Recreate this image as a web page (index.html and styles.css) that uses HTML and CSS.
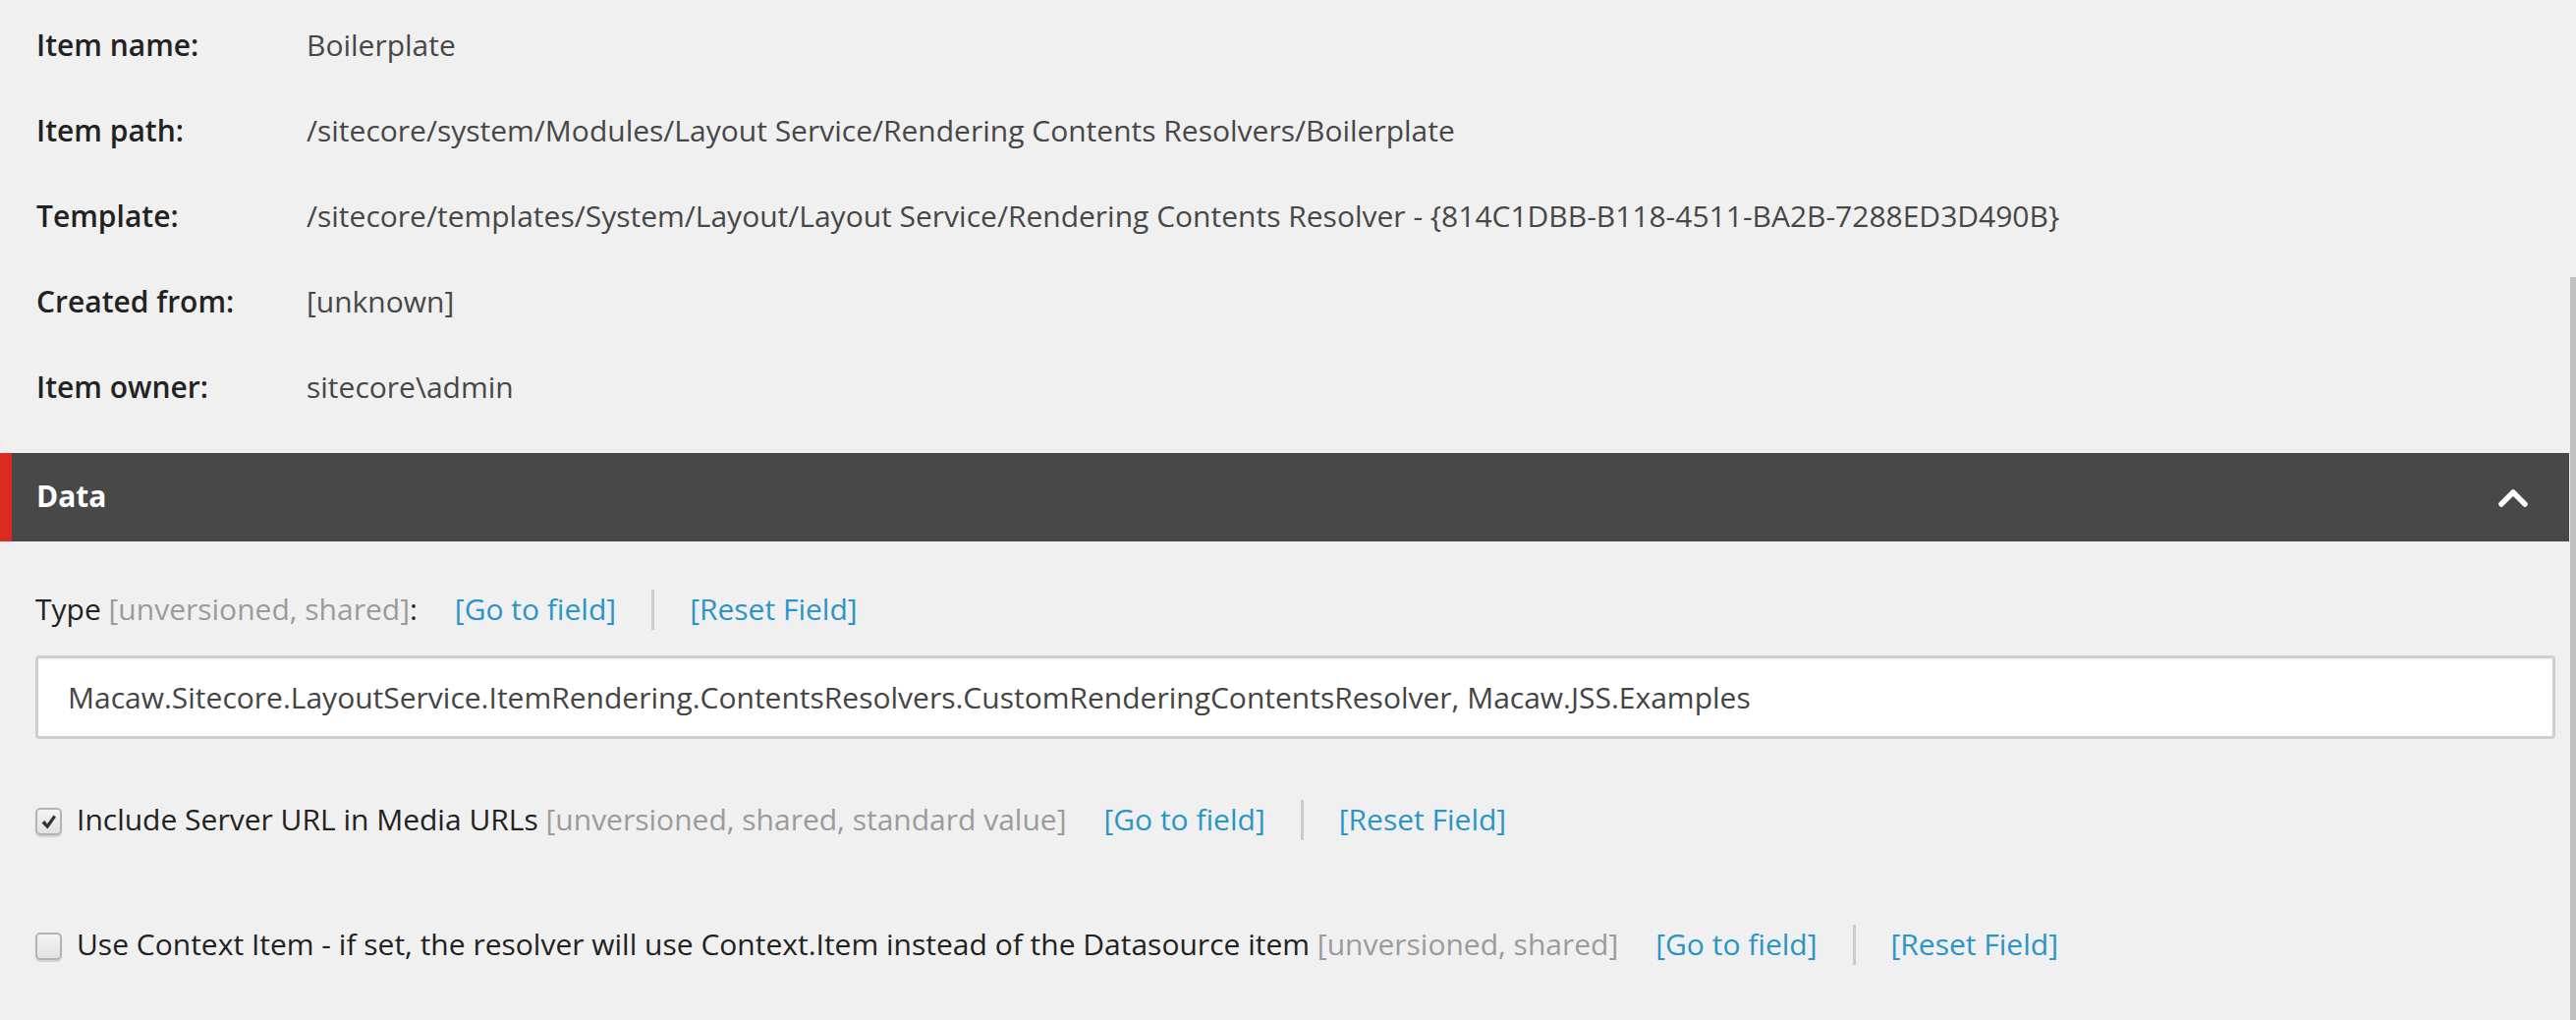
FILE: index.html
```html
<!DOCTYPE html>
<html lang="en">
<head>
<meta charset="utf-8">
<title>Boilerplate</title>
<link rel="stylesheet" href="styles.css">
</head>
<body>
<div class="page">
  <div class="info">
    <div class="row"><span class="label">Item name:</span><span class="value">Boilerplate</span></div>
    <div class="row"><span class="label">Item path:</span><span class="value">/sitecore/system/Modules/Layout Service/Rendering Contents Resolvers/Boilerplate</span></div>
    <div class="row"><span class="label">Template:</span><span class="value">/sitecore/templates/System/Layout/Layout Service/Rendering Contents Resolver - {814C1DBB-B118-4511-BA2B-7288ED3D490B}</span></div>
    <div class="row"><span class="label">Created from:</span><span class="value">[unknown]</span></div>
    <div class="row"><span class="label">Item owner:</span><span class="value">sitecore\admin</span></div>
  </div>

  <div class="section-header">
    <span class="section-title">Data</span>
    <svg class="chevron" width="30" height="22" viewBox="0 0 30 22"><polyline points="3,18 15,6 27,18" fill="none" stroke="#fff" stroke-width="5.5" stroke-linecap="round" stroke-linejoin="round"/></svg>
  </div>

  <div class="fields">
    <div class="field-line">
      <span class="fname">Type <span class="meta">[unversioned, shared]</span>:</span>
      <a class="link first">[Go to field]</a>
      <span class="sep"></span>
      <a class="link">[Reset Field]</a>
    </div>
    <div class="input">Macaw.Sitecore.LayoutService.ItemRendering.ContentsResolvers.CustomRenderingContentsResolver, Macaw.JSS.Examples</div>

    <div class="field-line check-line check-one">
      <span class="checkbox checked"><svg width="19" height="19" viewBox="0 0 19 19"><path d="M2.5 10.5 L5.5 8 L8 11.5 L14.5 2.5 L17 4.5 L8.5 16.5 Z" fill="#333"/></svg></span>
      <span class="fname">Include Server URL in Media URLs <span class="meta">[unversioned, shared, standard value]</span></span>
      <a class="link first">[Go to field]</a>
      <span class="sep"></span>
      <a class="link">[Reset Field]</a>
    </div>

    <div class="field-line check-line check-two">
      <span class="checkbox"></span>
      <span class="fname">Use Context Item - if set, the resolver will use Context.Item instead of the Datasource item <span class="meta">[unversioned, shared]</span></span>
      <a class="link first">[Go to field]</a>
      <span class="sep"></span>
      <a class="link">[Reset Field]</a>
    </div>
  </div>
  <div class="scroll-thumb"></div>
</div>
</body>
</html>
```
FILE: styles.css
```css
html, body {
  margin: 0;
  padding: 0;
  background: #f0f0f0;
  height: 100%;
  overflow: hidden;
}
body {
  font-family: "Open Sans", "Noto Sans", sans-serif;
  font-size: 30px;
  line-height: 40px;
  color: #222;
}
.page {
  position: relative;
  width: 2615px;
  height: 1038px;
}
.info {
  display: flex;
  flex-direction: column;
  gap: 47px;
  padding: 26px 0 47px 37px;
}
.row {
  display: grid;
  grid-template-columns: 275px 1fr;
  height: 40px;
}
.label {
  font-weight: 600;
  color: #222;
}
.value {
  color: #474747;
}
.section-header {
  height: 90px;
  box-sizing: border-box;
  background: #484848;
  border-left: 12px solid #dc2a1f;
  display: flex;
  align-items: center;
  justify-content: space-between;
  padding: 0 42px 0 25px;
}
.section-title {
  color: #fff;
  font-weight: 700;
  position: relative;
  top: -1px;
}
.chevron {
  display: block;
}
.fields {
  padding: 49px 14px 0 36px;
}
.field-line {
  display: flex;
  align-items: center;
  height: 40px;
  white-space: nowrap;
}
.fname {
  color: #222;
}
.meta {
  color: #9b9b9b;
}
.link {
  color: #2a95c6;
  cursor: pointer;
}
.link.first {
  margin-left: 38px;
}
.sep {
  width: 3px;
  height: 41px;
  background: #cccccc;
  margin: 0 36px 0 36px;
}
.input {
  margin-top: 27px;
  height: 85px;
  box-sizing: border-box;
  background: #fff;
  border: 3px solid #cfcfcf;
  border-radius: 4px;
  box-shadow: inset 0 2px 2px rgba(0, 0, 0, 0.04);
  padding: 0 30px;
  line-height: 79px;
  color: #444;
}
.check-one {
  margin-top: 62px;
}
.check-two {
  margin-top: 87px;
}
.checkbox {
  width: 27px;
  height: 28px;
  box-sizing: border-box;
  border: 2px solid #b4b4b4;
  border-radius: 5px;
  background: linear-gradient(#f3f3f3, #e2e2e2);
  box-shadow: 0 2px 1px rgba(0, 0, 0, 0.12);
  margin-right: 15px;
  position: relative;
  top: 2px;
  display: flex;
  align-items: center;
  justify-content: center;
}
.checkbox svg {
  display: block;
}
.scroll-thumb {
  position: absolute;
  top: 282px;
  bottom: 0;
  right: -7px;
  width: 6px;
  background: #c1c1c1;
}
```
